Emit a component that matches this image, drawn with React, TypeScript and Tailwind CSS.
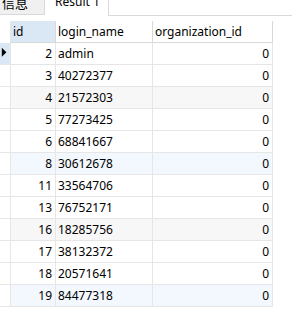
import React from "react";

const rows: [number, string][] = [
  [2, "admin"],
  [3, "40272377"],
  [4, "21572303"],
  [5, "77273425"],
  [6, "68841667"],
  [8, "30612678"],
  [11, "33564706"],
  [13, "76752171"],
  [16, "18285756"],
  [17, "38132372"],
  [18, "20571641"],
  [19, "84477318"],
];

function rowBg(i: number): string {
  if (i % 3 !== 2) return "bg-white";
  return Math.floor(i / 3) % 2 === 0 ? "bg-[#f7f7f7]" : "bg-[#f2f8fd]";
}

export default function App() {
  return (
    <div className="w-[292px] h-[311px] bg-white overflow-hidden font-['Noto_Sans',sans-serif] text-[12px] text-black">
      {/* tab bar */}
      <div className="flex h-[21px] items-start">
        <div className="w-[45px] h-[15px] bg-[#f0f0f0] border-b border-r border-[#d9d9d9] overflow-hidden pl-[2px]">
          <div className="text-[13px] leading-[13px] mt-[-4px] font-['Noto_Sans_CJK_SC',sans-serif]">信息</div>
        </div>
        <div className="w-[64px] h-[16px] bg-white border-r border-[#d9d9d9] overflow-hidden pl-[10px]">
          <div className="leading-[12px] mt-[-4px] whitespace-nowrap">Result 1</div>
        </div>
        <div className="flex-1 h-[16px] border-b border-[#d9d9d9]" />
      </div>
      {/* header */}
      <div className="flex h-[22px]">
        <div className="w-[11px] border-r border-[#e3e3e3]" />
        <div className="w-[45px] bg-[#dae8f6] border-r border-b border-[#d8d8d8] pl-[2px] leading-[21px]">id</div>
        <div className="w-[97px] border-r border-b border-[#d8d8d8] pl-[2px] leading-[21px]">login_name</div>
        <div className="w-[120px] border-r border-b border-[#d8d8d8] pl-[2px] leading-[21px] whitespace-nowrap">organization_id</div>
      </div>
      {rows.map(([id, name], i) => (
        <div key={id} className="flex h-[22px]">
          <div
            className={`w-[11px] border-r border-b border-[#e6e6e6] flex items-center ${
              i === 0 ? "bg-[#dae8f6]" : "bg-white"
            }`}
          >
            {i === 0 && (
              <svg width="11" height="22" viewBox="0 0 11 22" className="block">
                <polygon points="2,4 7,9 2,14" fill="#000" />
              </svg>
            )}
          </div>
          <div className={`w-[45px] border-r border-b border-[#e6e6e6] text-right pr-[3px] leading-[21px] ${rowBg(i)}`}>{id}</div>
          <div className={`w-[97px] border-r border-b border-[#e6e6e6] pl-[2px] leading-[21px] ${rowBg(i)}`}>{name}</div>
          <div className={`w-[120px] border-r border-b border-[#e6e6e6] text-right pr-[3px] leading-[21px] ${rowBg(i)}`}>0</div>
        </div>
      ))}
    </div>
  );
}
